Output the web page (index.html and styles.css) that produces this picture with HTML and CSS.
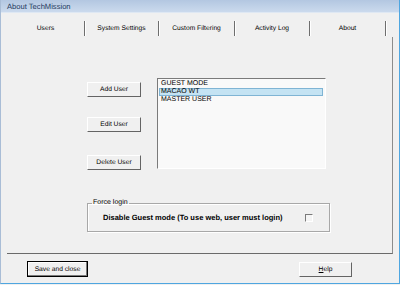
FILE: index.html
```html
<!DOCTYPE html>
<html lang="en">
<head>
    <meta charset="UTF-8">
    <title>About TechMission</title>
    <link rel="stylesheet" href="styles.css">
</head>
<body>
    <div class="window">
        <div class="titlebar">About TechMission</div>

        <!-- Onglets -->
        <div class="tabs">
            <div class="tab tab-users">Users</div>
            <div class="tab tab-system">System Settings</div>
            <div class="tab tab-filter">Custom Filtering</div>
            <div class="tab tab-log">Activity Log</div>
            <div class="tab tab-about">About</div>
        </div>

        <!-- Page Users -->
        <div class="panel">
            <div class="users">
                <div class="user-buttons">
                    <button class="btn btn-add">Add User</button>
                    <button class="btn btn-edit">Edit User</button>
                    <button class="btn btn-delete">Delete User</button>
                </div>
                <div class="listbox">
                    <div class="item">GUEST MODE</div>
                    <div class="item selected">MACAO WT</div>
                    <div class="item">MASTER USER</div>
                </div>
            </div>

            <fieldset class="group">
                <legend>Force login</legend>
                <div class="group-row">
                    <span class="bold">Disable Guest mode (To use web, user must login)</span>
                    <span class="checkbox"></span>
                </div>
            </fieldset>
        </div>

        <div class="footer">
            <button class="btn btn-save">Save and close</button>
            <button class="btn btn-help"><u>H</u>elp</button>
        </div>
    </div>
</body>
</html>
```

FILE: styles.css
```css
body { margin: 0; background: #f0f0f0; font-family: "Liberation Sans", Arial, sans-serif; font-size: 7px; color: #000000; text-rendering: geometricPrecision; }

.window { width: 398px; height: 283px; border-left: 1px solid #a9bdd6; border-right: 1px solid #4fa6e0; border-bottom: 1px solid #4fa6e0; background: #f0f0f0; }
.titlebar { height: 13px; line-height: 14px; padding-left: 6px; font-size: 7.6px; color: #1e3a60; background: linear-gradient(#b3c7e1, #cbdaed); border-bottom: 1px solid #dfe8f3; box-sizing: border-box; }

.tabs { display: flex; height: 24px; padding-left: 6px; }
.tab { height: 15px; margin-top: 8px; line-height: 15px; text-align: center; font-size: 6.7px; border-right: 1px solid #6e6e6e; box-shadow: 1px 0 0 #ffffff; box-sizing: border-box; }
.tab-users { width: 78px; }
.tab-system { width: 74px; }
.tab-filter { width: 76px; }
.tab-log { width: 75px; }
.tab-about { width: 76px; }

.panel { margin-left: 6px; width: 305px; height: 175px; border-right: 1px solid #8c8c8c; border-bottom: 1px solid #6a6a6a; padding: 41px 0 0 80px; }

.users { display: flex; align-items: flex-start; gap: 16px; height: 91px; }
.user-buttons { display: flex; flex-direction: column; margin-top: 4px; }

.btn { font-family: "Liberation Sans", Arial, sans-serif; font-size: 6.7px; color: #000000; background: #f0f0f0; border: 1px solid; border-color: #ffffff #646464 #646464 #ffffff; padding: 0; margin: 0; height: 15px; text-rendering: geometricPrecision; }
.btn-add, .btn-edit, .btn-delete { width: 54px; }
.btn-edit { margin-top: 20px; }
.btn-delete { margin-top: 23px; }

.listbox { width: 169px; height: 91px; box-sizing: border-box; background: #f9f9f9; border: 1px solid; border-color: #7a7a7a #ffffff #ffffff #7a7a7a; padding: 1px 2px 0 1px; }
.item { height: 8px; line-height: 8px; padding-left: 2px; box-sizing: border-box; }
.selected { background: #c4e3f3; border: 1px solid #7fb4d4; line-height: 6px; padding-left: 1px; }

.group { width: 243px; height: 33px; margin: 30px 0 0 0; padding: 0; box-sizing: border-box; border: 1px solid #a8a8a8; box-shadow: inset 1px 1px 0 #ffffff, 1px 1px 0 #ffffff; }
.group legend { padding: 0 1px; margin-left: 4px; line-height: 8px; }
.group-row { display: flex; justify-content: space-between; align-items: center; padding: 6px 16px 0 15px; }
.bold { font-weight: bold; font-size: 7.5px; }
.checkbox { width: 8px; height: 8px; box-sizing: border-box; border: 1px solid; border-color: #7a7a7a #ffffff #ffffff #7a7a7a; background: #f4f4f4; }

.footer { display: flex; justify-content: space-between; padding: 7px 47px 0 26px; }
.btn-save { width: 61px; height: 16px; border: 1px solid #000000; box-shadow: inset -1px -1px 0 #7a7a7a, inset 1px 1px 0 #ffffff; }
.btn-help { width: 53px; height: 15px; margin-top: 1px; }
```
